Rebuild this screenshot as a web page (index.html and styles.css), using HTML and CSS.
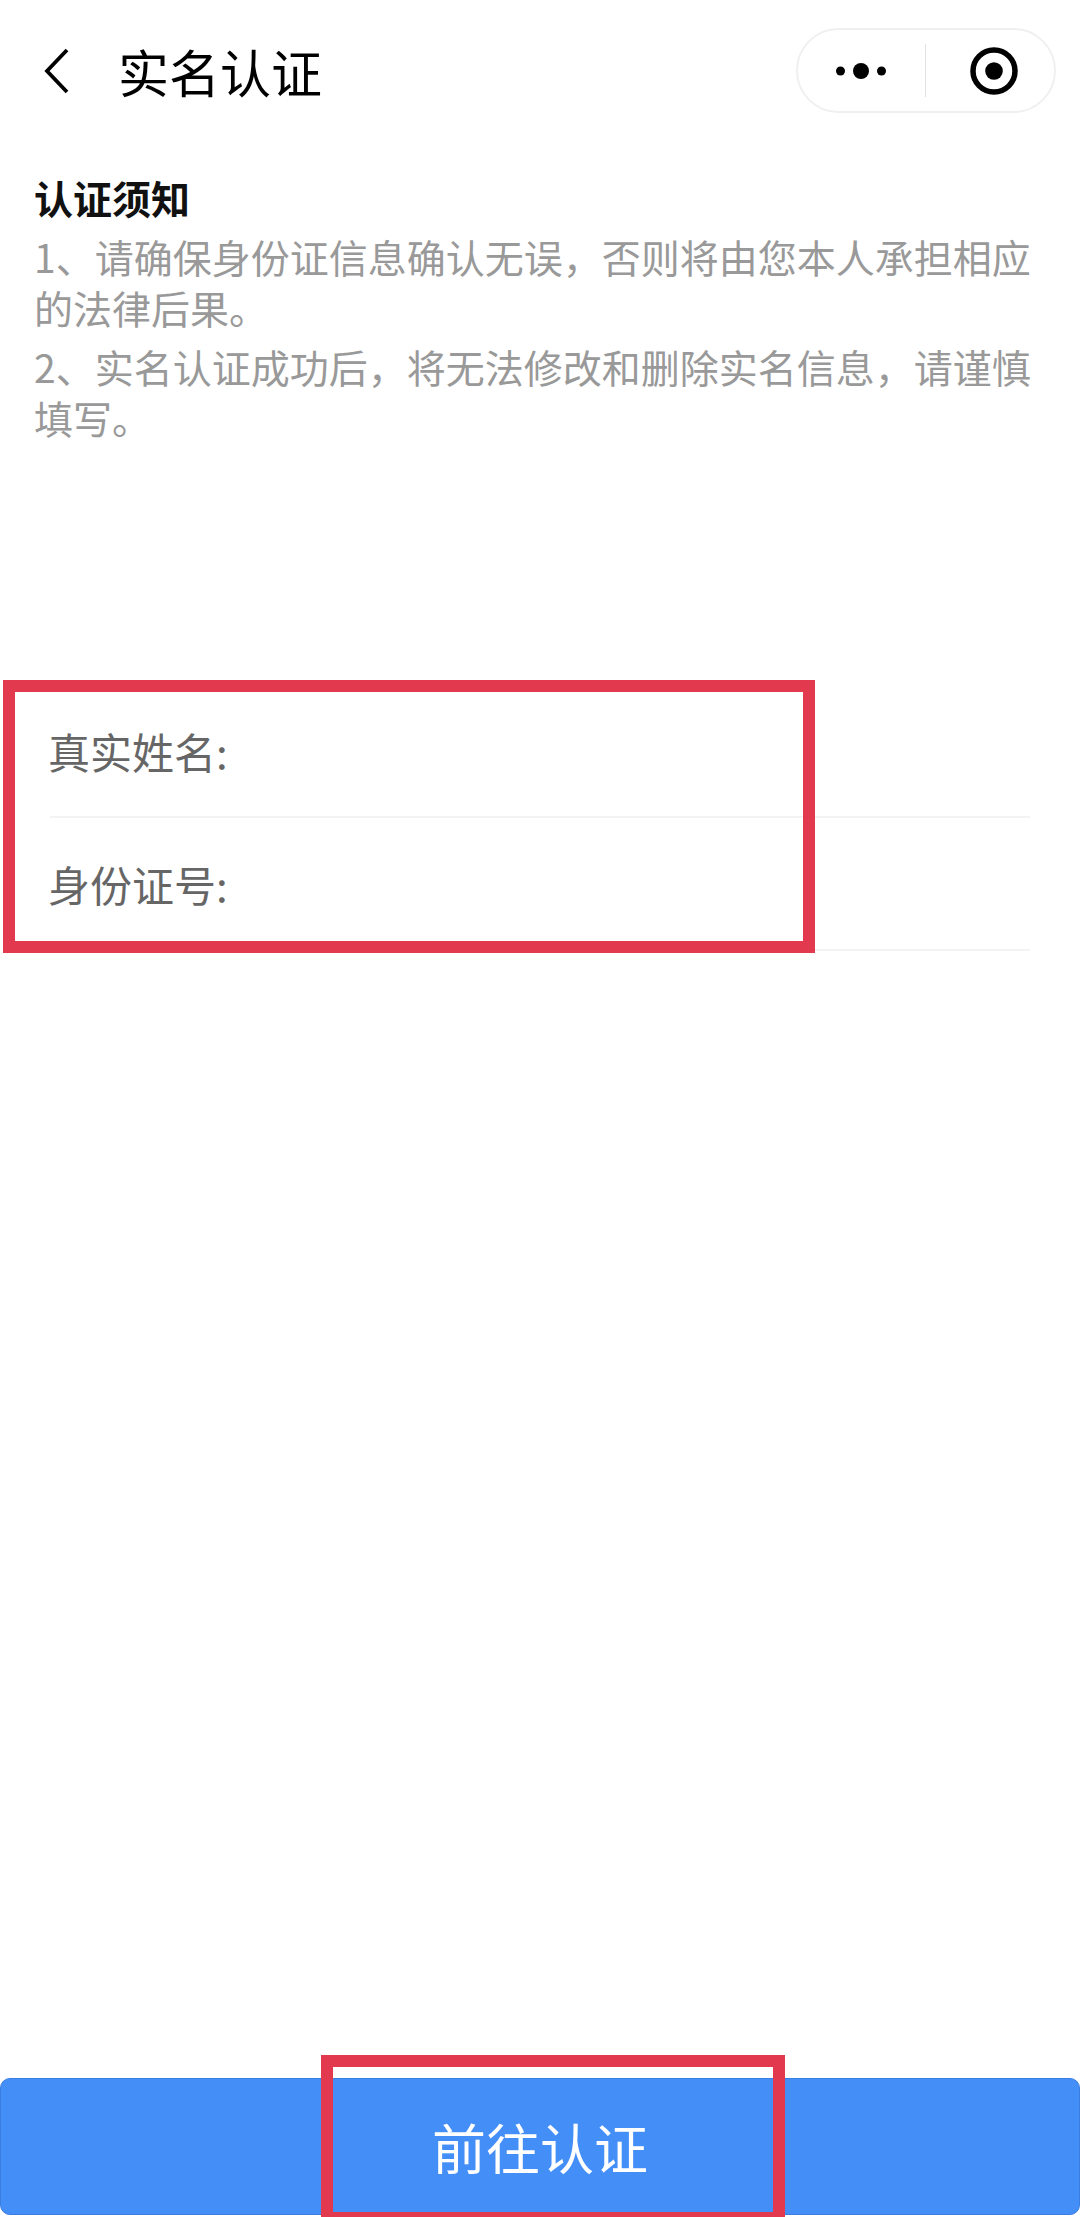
FILE: index.html
```html
<!DOCTYPE html>
<html lang="zh-CN">
<head>
  <meta charset="UTF-8">
  <meta name="viewport" content="width=device-width, initial-scale=1.0">
  <title>实名认证</title>
  <link rel="stylesheet" href="styles.css">
</head>
<body>
  <!-- Nav bar -->
  <header class="nav">
    <svg class="back-icon" viewBox="0 0 26 46" aria-hidden="true">
      <polyline points="23,2 3,23 23,44" fill="none" stroke="#000" stroke-width="3.8"/>
    </svg>
    <h1 class="nav-title">实名认证</h1>
    <div class="capsule">
      <svg class="more-icon" viewBox="0 0 50 18" aria-hidden="true">
        <circle cx="4.5" cy="9" r="4.5"/>
        <circle cx="25" cy="9" r="8"/>
        <circle cx="45.5" cy="9" r="4.5"/>
      </svg>
      <span class="capsule-line"></span>
      <svg class="target-icon" viewBox="0 0 48 48" aria-hidden="true">
        <circle cx="24" cy="24" r="21" fill="none" stroke="#000" stroke-width="5.5"/>
        <circle cx="24" cy="24" r="8.8"/>
      </svg>
    </div>
  </header>

  <!-- Notice -->
  <section class="notice">
    <h2>认证须知</h2>
    <p>1、请确保身份证信息确认无误，否则将由您本人承担相应的法律后果。</p>
    <p>2、实名认证成功后，将无法修改和删除实名信息，请谨慎填写。</p>
  </section>

  <!-- Form -->
  <form class="form">
    <div class="field">
      <label for="realName">真实姓名:</label>
      <input type="text" id="realName">
    </div>
    <div class="field">
      <label for="idNumber">身份证号:</label>
      <input type="text" id="idNumber">
    </div>
  </form>

  <button class="submit-btn" type="button">前往认证</button>

  <!-- Red annotation boxes drawn over the screenshot -->
  <div class="mark mark-form"></div>
  <div class="mark mark-button"></div>
</body>
</html>
```

FILE: styles.css
```css
/* General body styling */
html, body {
  margin: 0;
  padding: 0;
}

body {
  position: relative;
  display: flex;
  flex-direction: column;
  height: 2217px;
  overflow: hidden;
  background-color: white;
  font-family: "Noto Sans CJK SC", "Liberation Sans", sans-serif;
}

/* Nav bar */
.nav {
  display: flex;
  align-items: center;
  height: 141px;
  padding: 0 24px 0 44px;
}

.back-icon {
  width: 26px;
  height: 46px;
}

.nav-title {
  margin: 0 0 0 48px;
  font-size: 51px;
  font-weight: 400;
  line-height: 60px;
  color: black;
}

.capsule {
  display: flex;
  align-items: center;
  box-sizing: border-box;
  width: 260px;
  height: 85px;
  margin-left: auto;
  border: 2px solid rgb(240, 240, 240);
  border-radius: 43px;
}

.more-icon {
  width: 50px;
  height: 18px;
  margin-left: 38px;
}

.capsule-line {
  width: 1px;
  height: 53px;
  margin-left: 39px;
  background-color: rgb(226, 226, 226);
}

.target-icon {
  width: 48px;
  height: 48px;
  margin-left: 44px;
}

/* Notice */
.notice {
  margin-top: 31px;
  padding: 0 34px;
}

.notice h2 {
  margin: 0;
  font-size: 39px;
  font-weight: 700;
  line-height: 51px;
  color: rgb(17, 17, 17);
}

.notice p {
  margin: 8px 0 0;
  font-size: 39px;
  line-height: 51px;
  color: rgb(153, 153, 153);
}

/* Form */
.form {
  margin: 242px 50px 0;
}

.field {
  display: flex;
  align-items: center;
  box-sizing: border-box;
  height: 133px;
  border-bottom: 2px solid rgb(243, 243, 243);
}

.field label {
  margin-left: -2px;
  font-size: 42px;
  color: rgb(102, 102, 102);
}

.field input {
  flex: 1;
  min-width: 0;
  border: none;
  outline: none;
  background: transparent;
}

/* Bottom button */
.submit-btn {
  height: 137px;
  margin-top: auto;
  margin-bottom: 2px;
  padding: 0;
  border: 1px solid rgb(60, 125, 225);
  border-radius: 10px;
  background-color: rgb(68, 142, 248);
  font-family: inherit;
  font-size: 54px;
  color: white;
  cursor: pointer;
}

/* Annotation boxes */
.mark {
  position: absolute;
  box-sizing: border-box;
  border: 12px solid rgb(227, 57, 78);
}

.mark-form {
  top: 680px;
  left: 3px;
  width: 812px;
  height: 273px;
}

.mark-button {
  top: 2055px;
  left: 321px;
  width: 464px;
  height: 169px;
}
```
